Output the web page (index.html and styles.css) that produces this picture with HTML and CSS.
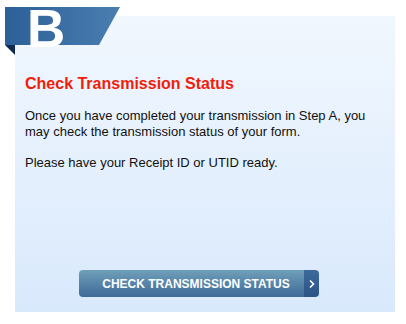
FILE: index.html
```html
<!DOCTYPE html>
<html lang="en">
  <head>
    <meta charset="UTF-8" />
    <title>Step B</title>
    <link rel="stylesheet" href="styles.css">
  </head>
  <body>
    <div class="wrap">
      <div class="panel">
        <div class="step">
          <svg class="step-bg" width="116" height="48" viewBox="0 0 116 48">
            <defs>
              <linearGradient id="bg" x1="0" y1="0" x2="1" y2="0">
                <stop offset="0" stop-color="#2d5f98"/>
                <stop offset="1" stop-color="#4a7eb0"/>
              </linearGradient>
            </defs>
            <polygon points="0,0 115,0 94,38 0,38" fill="url(#bg)"/>
            <polygon points="0,38 10,38 10,48" fill="#0f2a52"/>
          </svg>
          <span class="step-letter">B</span>
        </div>
        <h2 class="title">Check Transmission Status</h2>
        <p class="text">Once you have completed your transmission in Step A, you may check the transmission status of your form.</p>
        <p class="text">Please have your Receipt ID or UTID ready.</p>
        <div class="actions">
          <a class="btn" href="#">
            <span class="btn-label">CHECK TRANSMISSION STATUS</span>
            <span class="btn-arrow">
              <svg width="8" height="10" viewBox="0 0 8 10"><polyline points="2,1.5 5.5,5 2,8.5" fill="none" stroke="#fff" stroke-width="1.6"/></svg>
            </span>
          </a>
        </div>
      </div>
    </div>
  </body>
</html>
```

FILE: styles.css
```css
*{
    margin: 0;
    padding: 0;
    box-sizing: border-box;
}

body{
    background: #fff;
    font-family: "Liberation Sans", Arial, sans-serif;
}

.wrap{
    padding: 16px 0 0 15px;
}

.panel{
    position: relative;
    width: 380px;
    height: 296px;
    background: linear-gradient(#f1f7fe, #d9e9fc);
    padding: 58px 10px 0 10px;
    display: flex;
    flex-direction: column;
}

.step{
    position: absolute;
    left: -10px;
    top: -9px;
    width: 116px;
    height: 48px;
}

.step-bg{
    display: block;
}

.step-letter{
    position: absolute;
    left: 22px;
    top: -5px;
    color: #fff;
    font-size: 53px;
    font-weight: bold;
    line-height: 1;
}

.title{
    color: #f01e0b;
    font-size: 16px;
    font-weight: bold;
    line-height: 20px;
    margin-bottom: 14px;
}

.text{
    color: #111;
    font-size: 13px;
    line-height: 16px;
    margin-bottom: 15px;
}

.actions{
    margin-top: auto;
    margin-bottom: 15px;
    padding-left: 54px;
}

.btn{
    display: inline-flex;
    width: 240px;
    height: 27px;
    border-radius: 4px;
    overflow: hidden;
    text-decoration: none;
}

.btn-label{
    flex: 1;
    display: flex;
    align-items: center;
    justify-content: center;
    padding-left: 9px;
    color: #fff;
    font-size: 12px;
    font-weight: bold;
    background: linear-gradient(#709fb9, #3e6a99);
}

.btn-arrow{
    width: 15px;
    display: flex;
    align-items: center;
    justify-content: center;
    background: linear-gradient(#3d6a9a, #2b5486);
}
```
